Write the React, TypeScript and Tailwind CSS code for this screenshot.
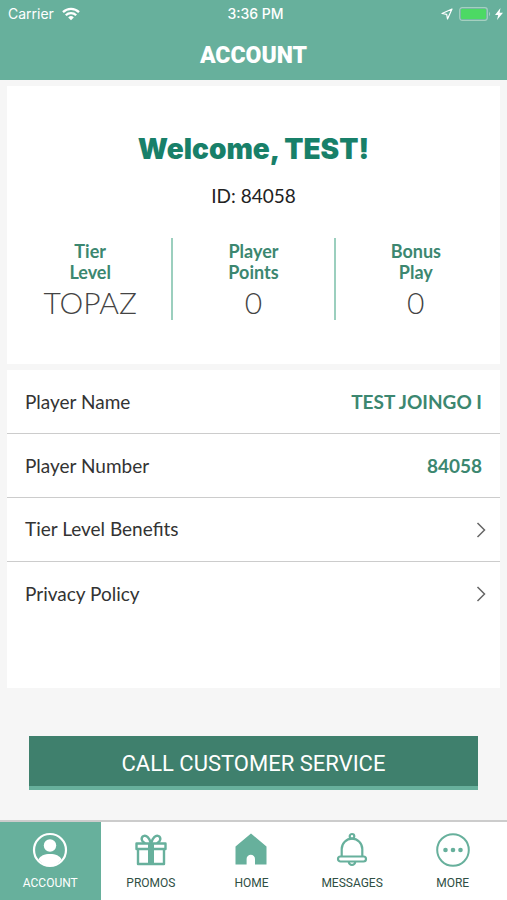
import React from 'react';

const stats = [
  { label: ['Tier', 'Level'], value: 'TOPAZ' },
  { label: ['Player', 'Points'], value: '0' },
  { label: ['Bonus', 'Play'], value: '0' },
];

const details = [
  { label: 'Player Name', value: 'TEST JOINGO I' },
  { label: 'Player Number', value: '84058' },
];

const links = ['Tier Level Benefits', 'Privacy Policy'];

const AccountIcon = () => (
  <svg viewBox="0 0 36 36" className="size-9" fill="none">
    <circle cx="18" cy="18" r="16" stroke="currentColor" strokeWidth="2.2" />
    <circle cx="18" cy="13.5" r="6.2" fill="currentColor" />
    <path d="M6.5 27.5C8 23.8 12.5 22 18 22s10 1.800 11.500 5.500A16 16 0 0 1 18 34 16 16 0 0 1 6.500 27.500Z" fill="currentColor" />
  </svg>
);

const GiftIcon = () => (
  <svg viewBox="0 0 36 36" className="size-9" fill="none" stroke="currentColor" strokeWidth="2.4">
    <path d="M3.500 11.500h29v5.500h-29zM5 17h26v15H5z" strokeLinejoin="round" />
    <path d="M18 11v21" strokeWidth="6" />
    <path d="M17.500 10.500C16.500 6 13.500 2.800 10.500 4 7.500 5.500 8.500 9.500 11.500 10.800M18.500 10.500C19.500 6 22.500 2.800 25.500 4c3 1.500 2 5.500-1 6.800" strokeLinecap="round" />
  </svg>
);

const HomeIcon = () => (
  <svg viewBox="0 0 36 36" className="size-9" fill="currentColor">
    <path d="M18 1.500 33.500 14.500v18H22V27a4.200 4.200 0 0 0-8.400 0v5.500H2.500v-18Z" />
  </svg>
);

const BellIcon = () => (
  <svg viewBox="0 0 36 36" className="size-9" fill="none" stroke="currentColor" strokeWidth="2.2">
    <path d="M7.700 24.500V17a10.300 10.300 0 0 1 20.600 0v7.500" />
    <rect x="4" y="24.500" width="28" height="5" rx="2.500" />
    <circle cx="18" cy="4.300" r="2.300" />
    <path d="M14.800 29.800a3.200 3.200 0 0 0 6.400 0" />
  </svg>
);

const MoreIcon = () => (
  <svg viewBox="0 0 36 36" className="size-9" fill="none">
    <circle cx="18" cy="18" r="15.800" stroke="currentColor" strokeWidth="2" />
    <circle cx="10.500" cy="18" r="2.300" fill="currentColor" />
    <circle cx="18" cy="18" r="2.300" fill="currentColor" />
    <circle cx="25.500" cy="18" r="2.300" fill="currentColor" />
  </svg>
);

const tabs = [
  { name: 'ACCOUNT', icon: <AccountIcon />, active: true },
  { name: 'PROMOS', icon: <GiftIcon />, active: false },
  { name: 'HOME', icon: <HomeIcon />, active: false },
  { name: 'MESSAGES', icon: <BellIcon />, active: false },
  { name: 'MORE', icon: <MoreIcon />, active: false },
];

const StatusBar: React.FC = () => (
  <div className="grid h-7 grid-cols-3 items-center pl-2 pr-1 font-[Inter,sans-serif] text-sm">
    <div className="flex items-center gap-2">
      <span>Carrier</span>
      <svg viewBox="0 0 18 14" className="h-3.5 w-[18px]" fill="none" stroke="currentColor" strokeWidth="2.300">
        <path d="M1 5.200a11.500 11.500 0 0 1 16 0M3.800 8.200a7.400 7.400 0 0 1 10.400 0" />
        <path d="M9 13.300 6.200 10.400a4 4 0 0 1 5.600 0Z" fill="currentColor" stroke="none" />
      </svg>
    </div>
    <span className="text-center font-medium">3:36 PM</span>
    <div className="flex items-center justify-end gap-1.5">
      <svg viewBox="0 0 12 12" className="size-3" fill="none" stroke="currentColor" strokeWidth="1.200" strokeLinejoin="round">
        <path d="M11 1 1 5.500l4.700.800L6.500 11Z" />
      </svg>
      <div className="flex items-center gap-1">
        <svg viewBox="0 0 32 14" className="h-3.5 w-8">
          <rect x="0.700" y="0.700" width="27.600" height="12.600" rx="2.500" fill="none" stroke="#a5d0c0" strokeWidth="1.200" />
          <rect x="2" y="2" width="25" height="10" rx="1" fill="#4cd964" />
          <path d="M30 5v4c1.500-.500 1.500-3.500 0-4Z" fill="#a5d0c0" />
        </svg>
        <svg viewBox="0 0 8 12" className="h-3 w-2" fill="currentColor">
          <path d="M5.500 0 0 7h3.200L2 12l6-7.200H4.600Z" />
        </svg>
      </div>
    </div>
  </div>
);

const App: React.FC = () => {
  return (
    <div className="flex min-h-screen flex-col bg-[#f6f6f6] font-[Lato,sans-serif] text-[#333]">
      <header className="bg-[#67b09c] text-white">
        <StatusBar />
        <h1 className="flex h-13 items-center justify-center pt-1 font-[Roboto,sans-serif] text-[23px] font-black">
          ACCOUNT
        </h1>
      </header>

      <main className="flex flex-1 flex-col gap-1.5 px-[7px] pt-1.5">
        {/* Summary */}
        <section className="bg-white pt-[45px] pb-11 text-center">
          <h2 className="font-[Inter,sans-serif] text-[28px] leading-9 font-black text-[#188069]">
            Welcome, TEST!
          </h2>
          <p className="mt-[15px] text-[19px] leading-7 text-[#222]">ID: 84058</p>
          <dl className="mt-7 grid grid-cols-3 pr-1 pl-0.5">
            {stats.map((stat) => (
              <div
                key={stat.label.join(' ')}
                className="h-[82px] border-[#9bcfbe] not-first:border-l-2"
              >
                <dt className="pt-[3px] text-[18px] leading-[21px] font-bold text-[#3c8770]">
                  {stat.label[0]}
                  <br />
                  {stat.label[1]}
                </dt>
                <dd className="text-[30px] leading-[38px] font-light text-[#444]">{stat.value}</dd>
              </div>
            ))}
          </dl>
        </section>

        {/* Details */}
        <section className="divide-y divide-[#ccc] bg-white pb-[62px] text-[19px]">
          {details.map((row) => (
            <div key={row.label} className="flex h-16 items-center justify-between px-[18px] pt-0.5">
              <span>{row.label}</span>
              <span className="font-bold text-[#3c8770]">{row.value}</span>
            </div>
          ))}
          {links.map((label) => (
            <a key={label} href="#" className="flex h-16 items-center justify-between px-[18px]">
              <span>{label}</span>
              <svg viewBox="0 0 10 16" className="-mr-1 h-4 w-2.5" fill="none" stroke="#666" strokeWidth="1.500">
                <path d="m1.500 1 7 7-7 7" />
              </svg>
            </a>
          ))}
        </section>

        <button
          type="button"
          className="mx-[22px] mt-[42px] mb-7 h-[54px] border-b-4 border-[#67b09c] bg-[#3f806d] pt-1 font-[Roboto,sans-serif] text-[22px] text-white"
        >
          CALL CUSTOMER SERVICE
        </button>
      </main>

      <nav className="grid h-20 grid-cols-5 border-t-2 border-[#ccc] bg-white pr-1 font-[Roboto,sans-serif] text-xs">
        {tabs.map((tab) => (
          <a
            key={tab.name}
            href="#"
            className={
              tab.active
                ? 'flex flex-col items-center bg-[#67b09c] pt-2.5 text-white'
                : 'flex flex-col items-center pt-2.5 text-[#67b09c]'
            }
          >
            {tab.icon}
            <span className={tab.active ? 'mt-[7px]' : 'mt-[7px] text-[#2f4f44]'}>{tab.name}</span>
          </a>
        ))}
      </nav>
    </div>
  );
};

export default App;
